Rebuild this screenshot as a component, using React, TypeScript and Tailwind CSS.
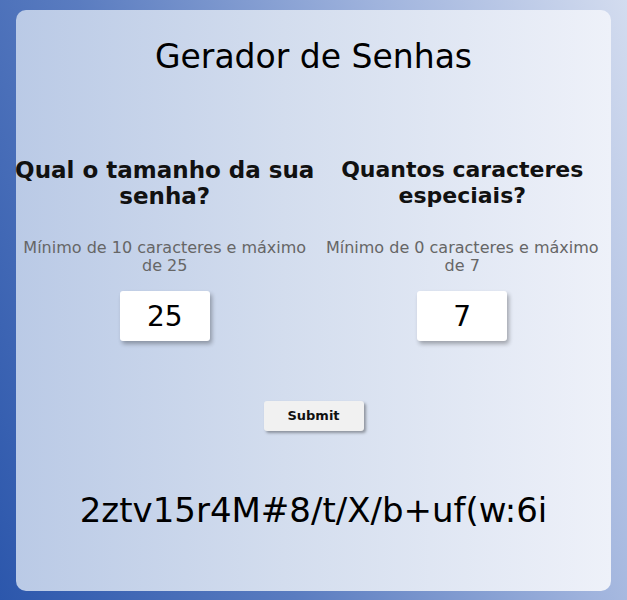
import React, { useState } from 'react';

const font = { fontFamily: '"DejaVu Sans", "Noto Sans", sans-serif' };

const NumberField: React.FC<{ value: string; onChange: (v: string) => void }> = ({ value, onChange }) => (
  <input
    type="number"
    value={value}
    onChange={e => onChange(e.target.value)}
    className="mt-[16px] w-[90px] h-[50px] bg-white rounded-[3px] text-center text-[28px] text-black outline-none shadow-[2px_3px_4px_rgba(0,0,0,0.3)] [appearance:textfield] [&::-webkit-inner-spin-button]:appearance-none"
  />
);

const App: React.FC = () => {
  const [tamanho, setTamanho] = useState('25');
  const [especiais, setEspeciais] = useState('7');
  const [senha] = useState('2ztv15r4M#8/t/X/b+uf(w:6i');

  return (
    <div
      className="min-h-screen w-full pt-[10px] pb-[9px] px-[16px] bg-[linear-gradient(70deg,#2c57ac_0%,#5a7cc0_35%,#9fb3dd_70%,#d3dcef_100%)]"
      style={font}
    >
      <div className="w-full h-[581px] rounded-[10px] bg-[linear-gradient(90deg,#bacae6_0%,#d3ddee_45%,#eef1f9_100%)] flex flex-col items-center">
        <h1 className="mt-[27px] text-[33px] leading-[40px] text-black">Gerador de Senhas</h1>

        <div className="mt-[80px] w-full grid grid-cols-2 items-start">
          <div className="flex flex-col items-center text-center">
            <h2 className="whitespace-nowrap text-[23px] leading-[26px] font-bold text-[#111]">
              Qual o tamanho da sua
              <br />
              senha?
            </h2>
            <p className="mt-[30px] max-w-[290px] text-[16px] leading-[18px] text-[#666]">Mínimo de 10 caracteres e máximo de 25</p>
            <NumberField value={tamanho} onChange={setTamanho} />
          </div>
          <div className="flex flex-col items-center text-center">
            <h2 className="whitespace-nowrap text-[22px] leading-[26px] font-bold text-[#111]">
              Quantos caracteres
              <br />
              especiais?
            </h2>
            <p className="mt-[30px] max-w-[290px] text-[16px] leading-[18px] text-[#666]">Mínimo de 0 caracteres e máximo de 7</p>
            <NumberField value={especiais} onChange={setEspeciais} />
          </div>
        </div>

        <button className="mt-[60px] w-[100px] h-[30px] bg-[#f1f1f1] rounded-[3px] text-[13px] font-bold text-[#111] shadow-[2px_2px_3px_rgba(0,0,0,0.35)]">
          Submit
        </button>

        <p className="mt-[57px] text-[34px] leading-[44px] text-black">{senha}</p>
      </div>
    </div>
  );
};

export default App;
